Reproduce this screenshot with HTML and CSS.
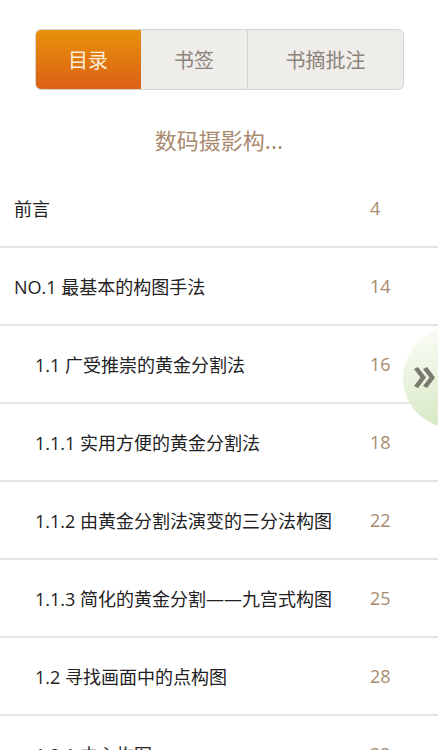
FILE: index.html
```html
<!DOCTYPE html>
<html lang="zh-CN">
<head>
<meta charset="utf-8">
<title>目录</title>
<link rel="stylesheet" href="styles.css">
</head>
<body>
<div class="page">
  <div class="tabs">
    <div class="tab tab-active">目录</div>
    <div class="tab tab-mid">书签</div>
    <div class="tab tab-last">书摘批注</div>
  </div>
  <div class="title">数码摄影构...</div>
  <ul class="toc">
    <li class="row"><span class="name">前言</span><span class="num">4</span></li>
    <li class="row"><span class="name">NO.1 最基本的构图手法</span><span class="num">14</span></li>
    <li class="row sub"><span class="name">1.1 广受推崇的黄金分割法</span><span class="num">16</span></li>
    <li class="row sub"><span class="name">1.1.1 实用方便的黄金分割法</span><span class="num">18</span></li>
    <li class="row sub"><span class="name">1.1.2 由黄金分割法演变的三分法构图</span><span class="num">22</span></li>
    <li class="row sub"><span class="name">1.1.3 简化的黄金分割——九宫式构图</span><span class="num">25</span></li>
    <li class="row sub"><span class="name">1.2 寻找画面中的点构图</span><span class="num">28</span></li>
    <li class="row sub"><span class="name">1.2.1 中心构图</span><span class="num">32</span></li>
  </ul>
  <div class="handle">
    <svg class="chev" width="24" height="21" viewBox="0 0 24 21">
      <path d="M1 2 L5 0 L13 10.5 L5 21 L1 19 L7.5 10.5 Z" fill="#7a796f"/>
      <path d="M10 2 L14 0 L22 10.5 L14 21 L10 19 L16.5 10.5 Z" fill="#7a796f"/>
    </svg>
  </div>
</div>
</body>
</html>
```
FILE: styles.css
```css
html, body {
  margin: 0;
  padding: 0;
  background: #ffffff;
  height: 750px;
  overflow: hidden;
}
.page {
  position: relative;
  width: 438px;
  height: 750px;
  overflow: hidden;
  font-family: "Open Sans", "Noto Sans CJK SC", sans-serif;
}
.tabs {
  display: flex;
  margin: 29px 34px 0 35px;
  height: 61px;
  box-sizing: border-box;
  border: 1px solid #d6d4d0;
  border-radius: 6px;
  overflow: hidden;
  background: #efede9;
}
.tab {
  display: flex;
  align-items: center;
  justify-content: center;
  font-family: "Noto Sans CJK SC", sans-serif;
  font-size: 20px;
  color: #8b827a;
}
.tab-active {
  width: 106px;
  background: linear-gradient(to bottom, #e8920a, #db5f15);
  color: #fcecd8;
  margin: -1px 0 -1px -1px;
}
.tab-mid {
  width: 106px;
  border-right: 1px solid #d6d4d0;
}
.tab-last {
  flex: 1;
}
.title {
  padding: 36px 0 18px;
  line-height: 26px;
  text-align: center;
  font-family: "Noto Sans CJK SC", sans-serif;
  font-size: 22px;
  color: #a88a6e;
}
.toc {
  list-style: none;
  margin: 0;
  padding: 0;
}
.row {
  display: flex;
  align-items: center;
  height: 76px;
  border-bottom: 2px solid #e4e4e4;
  padding-left: 14px;
  font-size: 18px;
  color: #222222;
}
.row.sub {
  padding-left: 35px;
}
.name {
  flex: 1;
}
.num {
  width: 68px;
  color: #a88a6e;
}
.handle {
  position: absolute;
  left: 403px;
  top: 328px;
  width: 100px;
  height: 100px;
  border-radius: 50%;
  background: linear-gradient(165deg, rgba(248,251,243,0.92) 10%, rgba(206,227,183,0.92) 95%);
}
.chev {
  position: absolute;
  left: 10px;
  top: 39px;
}
```
